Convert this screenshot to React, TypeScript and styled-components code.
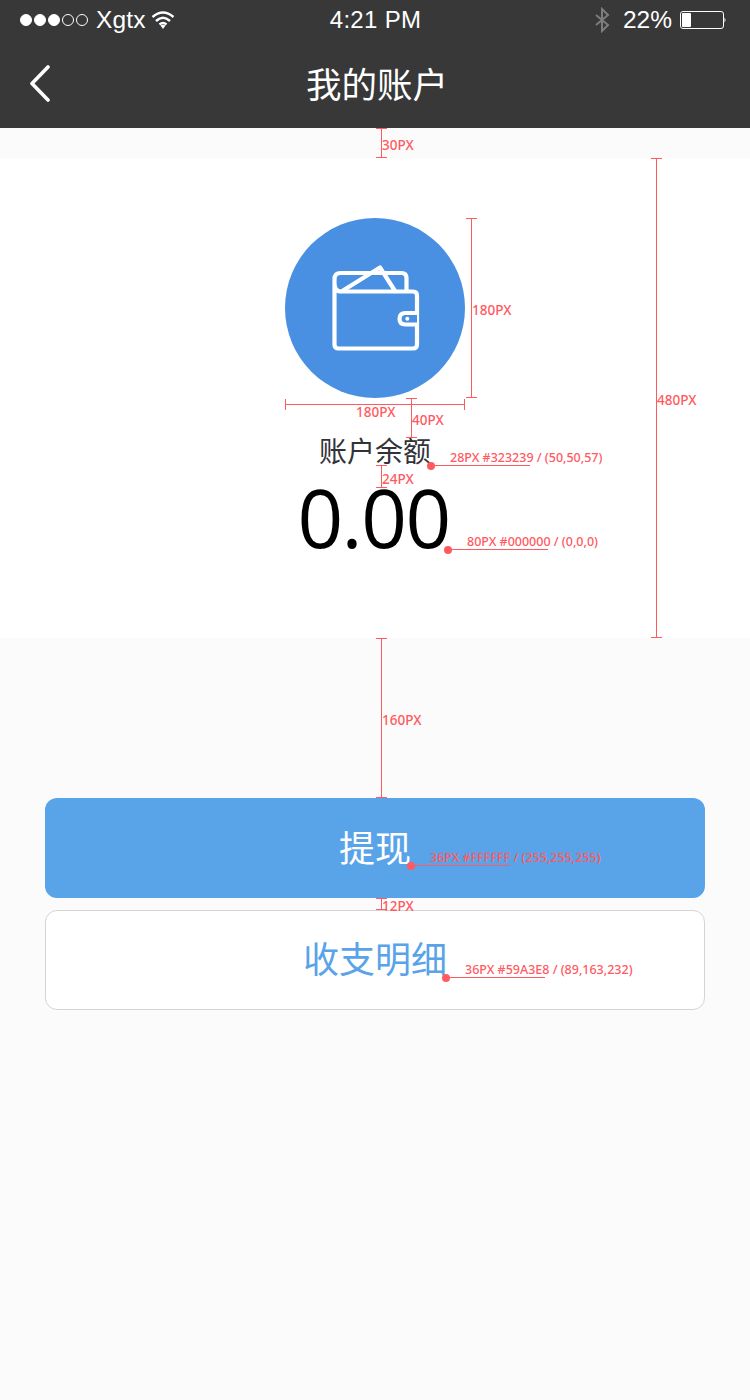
import React from "react";
import styled, { createGlobalStyle } from "styled-components";

const Global = createGlobalStyle`
  html, body { margin: 0; padding: 0; background: #fbfbfb; }
  body { font-family: "Liberation Sans", "Noto Sans CJK SC", sans-serif; }
`;
const RED = "#ff5a5f";
const Page = styled.div`position: relative; width: 750px; height: 1400px; overflow: hidden; background: #fbfbfb;`;
const Header = styled.header`background: #383838; height: 128px; color: #fff; display: flex; flex-direction: column;`;
const StatusBar = styled.div`height: 40px; box-sizing: border-box; display: grid; grid-template-columns: 1fr auto 1fr; align-items: center; padding: 0 24px 1px 20px; font-size: 24.5px; line-height: 38px;`;
const StatusLeft = styled.div`display: flex; align-items: center; gap: 8px;`;
const StatusRight = styled.div`display: flex; align-items: center; justify-content: flex-end; gap: 8px;`;
const Clock = styled.div`font-size: 24px; letter-spacing: .3px; margin-left: 5px;`;
const Dots = styled.div`display: flex; gap: 2px;`;
const Dot = styled.span<{ $on: boolean }>`
  width: 12px; height: 12px; box-sizing: border-box; border-radius: 50%;
  border: 1px solid #fff; background: ${p => (p.$on ? "#fff" : "transparent")};
`;
const Carrier = styled.span`letter-spacing: .2px;`;
const WifiIcon = styled.svg`margin-left: -2.5px;`;
const BluetoothIcon = styled.svg`margin-right: 4px;`;
const NavBar = styled.div`flex: 1; position: relative; display: flex; align-items: center; justify-content: center; padding-bottom: 2px;`;
const Title = styled.h1`margin: 0 0 0 4px; font-weight: 400; font-size: 35.5px; line-height: 48px; font-family: "Noto Sans CJK SC", sans-serif;`;
const Back = styled.svg`position: absolute; left: 28px; top: 25px;`;
const Card = styled.section`
  margin-top: 30px; height: 480px; background: #fff; box-sizing: border-box; padding-top: 60px;
  display: flex; flex-direction: column; align-items: center;
`;
const Circle = styled.div`width: 180px; height: 180px; border-radius: 50%; background: #4a90e2; display: flex; align-items: center; justify-content: center;`;
const Label = styled.div`margin-top: 35px; font-family: "Noto Sans CJK SC", sans-serif; font-size: 28px; line-height: 34px; color: #323239;`;
const Amount = styled.div`margin: 2px 3px 0 0; font-family: "Open Sans", sans-serif; font-size: 80px; line-height: 96px; color: #000; letter-spacing: -1.5px;`;
const Actions = styled.div`margin-top: 160px; padding: 0 45px; display: flex; flex-direction: column; gap: 12px;`;
const Button = styled.button<{ $primary?: boolean }>`
  height: 100px; width: 100%; box-sizing: border-box; border-radius: 12px;
  padding: 0 0 ${p => (p.$primary ? 4 : 6)}px;
  font-family: "Noto Sans CJK SC", sans-serif; font-size: 36px; line-height: 50px;
  border: ${p => (p.$primary ? "none" : "1px solid #d4d4d4")};
  background: ${p => (p.$primary ? "#59a3e8" : "#fff")};
  color: ${p => (p.$primary ? "#fff" : "#59a3e8")};
`;
const Note = styled.span<{ $x: number; $y: number }>`
  position: absolute; left: ${p => p.$x}px; top: ${p => p.$y}px;
  font-family: "Noto Sans", sans-serif; font-size: 12.5px; line-height: 14px; font-weight: 500;
  color: ${RED}; white-space: nowrap;
`;
const DimNote = styled(Note)`font-size: 13.5px;`;
const Rule = styled.i<{ $x: number; $y: number; $w?: number; $h?: number }>`
  position: absolute; left: ${p => p.$x}px; top: ${p => p.$y}px;
  width: ${p => p.$w ?? 1}px; height: ${p => p.$h ?? 1}px; background: ${RED};
`;
const Pin = styled.i<{ $x: number; $y: number }>`
  position: absolute; left: ${p => p.$x - 4}px; top: ${p => p.$y - 3}px;
  width: 8px; height: 8px; border-radius: 50%; background: ${RED};
`;

const VDim = ({ x, y1, y2 }: { x: number; y1: number; y2: number }) => (
  <>
    <Rule $x={x} $y={y1} $h={y2 - y1} />
    <Rule $x={x - 5} $y={y1} $w={11} />
    <Rule $x={x - 5} $y={y2 - 1} $w={11} />
  </>
);
const Leader = ({ x, y, w }: { x: number; y: number; w: number }) => (
  <>
    <Pin $x={x} $y={y} />
    <Rule $x={x} $y={y} $w={w} />
  </>
);

const Wallet = () => (
  <svg width="90" height="90" viewBox="0 0 90 90" fill="none" stroke="#fff" strokeWidth="4.200" strokeLinejoin="round" strokeLinecap="round">
    <path d="M4.500 20 V81.500 Q4.500 85.500 8.500 85.500 H83 Q87 85.500 87 81.500 V32.500 Q87 28.500 83 28.500 H11 Q4.500 28.500 4.500 20 V16 Q4.500 10 10.500 10 H71.500 Q76.500 10 76.500 15 V28" />
    <path d="M13 27.500 L50 4.500 L65 28" />
    <path d="M87 50 H75.500 Q69.500 50 69.500 55.800 Q69.500 61.500 75.500 61.500 H87" fill="#4a90e2" />
    <circle cx="77.300" cy="55.700" r="2" fill="#fff" stroke="none" />
  </svg>
);

export default function App() {
  return (
    <Page>
      <Global />
      <Header>
        <StatusBar>
          <StatusLeft>
            <Dots>
              {[1, 1, 1, 0, 0].map((on, i) => <Dot key={i} $on={!!on} />)}
            </Dots>
            <Carrier>Xgtx</Carrier>
            <WifiIcon width="24" height="20" viewBox="0 0 24 20" fill="none" stroke="#fff" strokeWidth="2.400">
              <path d="M1.500 7 Q12 -2 22.500 7" />
              <path d="M5 11 Q12 4.500 19 11" />
              <path d="M8.500 14.500 Q12 11.500 15.500 14.500" />
              <path d="M9.500 15.500 L12 19 L14.500 15.500 Q12 13.800 9.500 15.500Z" fill="#fff" stroke="none" />
            </WifiIcon>
          </StatusLeft>
          <Clock>4:21 PM</Clock>
          <StatusRight>
            <BluetoothIcon width="18" height="26" viewBox="0 0 18 26" fill="none" stroke="#7d7d7d" strokeWidth="2">
              <path d="M3 8 L15 18 L9 24 V2 L15 8 L3 18" />
            </BluetoothIcon>
            <span>22%</span>
            <svg width="46" height="20" viewBox="0 0 46 20" fill="none">
              <rect x=".5" y="1.500" width="43" height="17" rx="2.500" stroke="#fff" />
              <rect x="2" y="3" width="9" height="14" rx="1" fill="#fff" />
              <path d="M44.500 7.500 Q46.500 10 44.500 12.500Z" fill="#fff" />
            </svg>
          </StatusRight>
        </StatusBar>
        <NavBar>
          <Back width="24" height="38" viewBox="0 0 24 38" fill="none" stroke="#fff" strokeWidth="3.600" strokeLinecap="round" strokeLinejoin="round">
            <path d="M20 2 L4 18.500 L20 35" />
          </Back>
          <Title>我的账户</Title>
        </NavBar>
      </Header>
      <Card>
        <Circle><Wallet /></Circle>
        <Label>账户余额</Label>
        <Amount>0.00</Amount>
      </Card>
      <Actions>
        <Button $primary>提现</Button>
        <Button>收支明细</Button>
      </Actions>

      <VDim x={381} y1={128} y2={158} />
      <DimNote $x={382} $y={138}>30PX</DimNote>
      <VDim x={656} y1={158} y2={638} />
      <DimNote $x={657} $y={393}>480PX</DimNote>
      <VDim x={471} y1={218} y2={398} />
      <DimNote $x={472} $y={303}>180PX</DimNote>
      <Rule $x={285} $y={404} $w={180} />
      <Rule $x={285} $y={399} $h={11} />
      <Rule $x={464} $y={399} $h={11} />
      <DimNote $x={356} $y={405}>180PX</DimNote>
      <VDim x={411} y1={398} y2={438} />
      <DimNote $x={412} $y={413}>40PX</DimNote>
      <VDim x={381} y1={465} y2={488} />
      <DimNote $x={382} $y={472}>24PX</DimNote>
      <Leader x={431} y={465} w={99} />
      <Note $x={450} $y={451}>28PX #323239 / (50,50,57)</Note>
      <Leader x={448} y={549} w={100} />
      <Note $x={467} $y={535}>80PX #000000 / (0,0,0)</Note>
      <VDim x={381} y1={638} y2={798} />
      <DimNote $x={382} $y={713}>160PX</DimNote>
      <Leader x={411} y={865} w={99} />
      <Note $x={430} $y={851}>36PX #FFFFFF / (255,255,255)</Note>
      <VDim x={381} y1={898} y2={910} />
      <DimNote $x={382} $y={899}>12PX</DimNote>
      <Leader x={446} y={977} w={99} />
      <Note $x={465} $y={963}>36PX #59A3E8 / (89,163,232)</Note>
    </Page>
  );
}
